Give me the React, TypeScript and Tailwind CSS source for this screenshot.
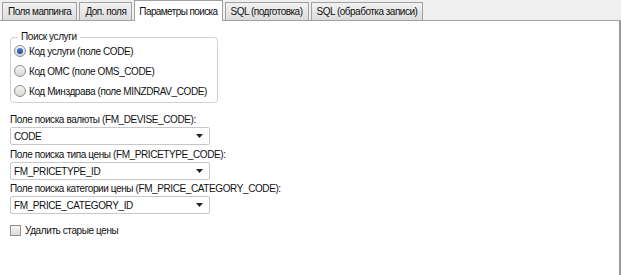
import React from 'react';

const tabs = ['Поля маппинга', 'Доп. поля', 'Параметры поиска', 'SQL (подготовка)', 'SQL (обработка записи)'];

function Combo({ value }: { value: string }) {
  return (
    <div className="w-[200px] h-[18px] border border-[#c8c8c8] rounded-[2px] bg-white flex items-center justify-between pl-[3px] pr-[6px]">
      <span>{value}</span>
      <svg width="7" height="4" viewBox="0 0 7 4"><path d="M0 0h7L3.5 4z" fill="#222" /></svg>
    </div>
  );
}

function Radio({ checked, label }: { checked?: boolean; label: string }) {
  return (
    <div className="flex items-center gap-[3px] h-[20px]">
      <span className="w-[12px] h-[12px] rounded-full border border-[#8f8f8f] bg-gradient-to-b from-[#f4f4f4] to-[#d8d8d8] flex items-center justify-center">
        {checked && <span className="w-[6px] h-[6px] rounded-full bg-gradient-to-b from-[#4a7fd0] to-[#1d4fa0]" />}
      </span>
      <span>{label}</span>
    </div>
  );
}

export default function App() {
  return (
    <div className="w-[621px] h-[275px] bg-[#f0f0f0] text-[10px] tracking-[-0.4px] text-[#111] flex flex-col overflow-hidden" style={{ fontFamily: '"Liberation Sans", Arial, sans-serif' }}>
      <div className="flex items-end h-[20px] pl-[2px] gap-[2px] relative z-10">
        {tabs.map((t, i) =>
          i === 2 ? (
            <div key={t} className="h-[21px] px-[4px] tracking-[-0.6px] bg-white border border-b-0 border-[#a0a0a0] flex items-center -mb-px">{t}</div>
          ) : (
            <div key={t} className="h-[18px] px-[5px] tracking-[-0.5px] bg-gradient-to-b from-[#f2f2f2] to-[#dcdcdc] border border-b-0 border-[#a0a0a0] flex items-center">{t}</div>
          )
        )}
      </div>
      <div className="flex-1 bg-white border-t border-r-2 border-[#a0a0a0] border-r-[#9a9a9a] pl-[10px] pt-[10px]">
        <fieldset className="w-[208px] border border-[#d0d0d0] rounded-[4px] pl-[3px] pb-[1px] pt-0">
          <legend className="px-[3px] ml-[4px] leading-[12px]">Поиск услуги</legend>
          <div className="flex flex-col -mt-[2px]">
            <Radio checked label="Код услуги (поле CODE)" />
            <Radio label="Код ОМС (поле OMS_CODE)" />
            <Radio label="Код Минздрава (поле MINZDRAV_CODE)" />
          </div>
        </fieldset>
        <div className="mt-[9px] flex flex-col">
          <div className="h-[15px] flex items-center">Поле поиска валюты (FM_DEVISE_CODE):</div>
          <Combo value="CODE" />
          <div className="h-[15px] mt-[2px] flex items-center">Поле поиска типа цены (FM_PRICETYPE_CODE):</div>
          <Combo value="FM_PRICETYPE_ID" />
          <div className="h-[15px] mt-[1px] flex items-center">Поле поиска категории цены (FM_PRICE_CATEGORY_CODE):</div>
          <Combo value="FM_PRICE_CATEGORY_ID" />
          <div className="flex items-center gap-[4px] mt-[9px]">
            <span className="w-[11px] h-[11px] border border-[#8f8f8f] bg-gradient-to-b from-[#f6f6f6] to-[#dcdcdc]" />
            <span>Удалить старые цены</span>
          </div>
        </div>
      </div>
    </div>
  );
}
